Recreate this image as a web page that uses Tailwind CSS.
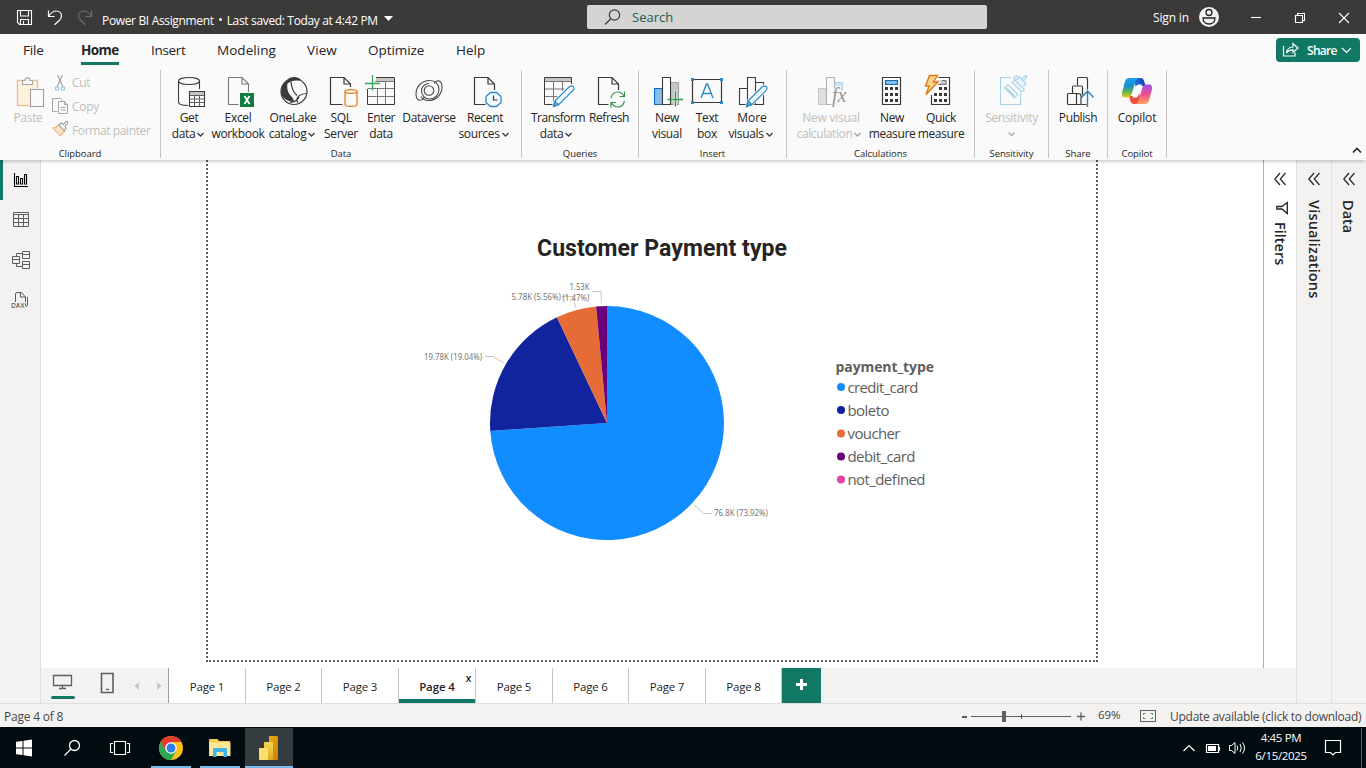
<!DOCTYPE html>
<html lang="en">
<head>
<meta charset="utf-8">
<title>Power BI Assignment</title>
<script src="https://cdn.jsdelivr.net/npm/@tailwindcss/browser@4"></script>
</head>
<body class="w-[1366px] h-[768px] overflow-hidden flex flex-col bg-white font-['Open_Sans','Noto_Sans',sans-serif] text-[12px] leading-4 text-[#252423] whitespace-nowrap">

<!-- Title bar -->
<header class="h-[34px] shrink-0 bg-[#3b3a39] text-white flex items-center">
  <svg class="w-[100px] h-[34px] shrink-0" viewBox="0 0 100 34" fill="none" stroke="#fff" stroke-width="1.1">
    <path d="M17.5 10.5h14v14h-12l-2-2zM20.500 10.500v5.500h8v-5.500M20.500 24.500v-5h8v5M23.500 24v-3"/>
    <path d="M48.500 10.500v6h6M48.700 16.300C51 12.500 53 11 56 11c3.500 0 5.500 2.300 5.500 5 0 1.800-.8 3-2 4.200L54.500 24.800" stroke-width="1.200"/>
    <path d="M91.500 10.500v6h-6M91.300 16.300C89 12.500 87 11 84 11c-3.500 0-5.500 2.300-5.500 5 0 1.800.8 3 2 4.200L85.500 24.800" stroke="#6e6d6c" stroke-width="1.200"/>
  </svg>
  <div class="w-[487px] flex items-center pl-[2px] pt-[7px]">
    <span class="tracking-[-0.34px]">Power BI Assignment</span>
    <span class="w-[3px] h-[3px] rounded-full bg-white mx-[5px] mb-[2px]"></span>
    <span class="tracking-[-0.34px]">Last saved: Today at 4:42 PM</span>
    <svg class="w-[9px] h-[5px] ml-[6px] mb-[5px]" viewBox="0 0 9 5"><path d="M0 0h9L4.500 5z" fill="#fff"/></svg>
  </div>
  <div class="w-[400px] h-[24px] rounded-[2px] bg-[#d4d4d2] flex items-center">
    <svg class="w-[18px] h-[18px] ml-[17px]" viewBox="0 0 18 18" fill="none" stroke="#3b3a39" stroke-width="1.200"><circle cx="10.500" cy="7" r="5.200"/><path d="M6.800 10.800L1 16.500"/></svg>
    <span class="ml-[10px] text-[13px] text-[#215f50]">Search</span>
  </div>
  <div class="flex-1 flex items-center pl-[166px]">
    <span class="w-[46px] pt-[2px] tracking-[-0.15px]">Sign in</span>
    <svg class="w-[167px] h-[34px]" viewBox="1199 0 167 34" fill="none" stroke="#fff" stroke-width="1.100">
      <circle cx="1209" cy="17" r="10" fill="#f3f2f1" stroke="none"/>
      <circle cx="1209" cy="12.500" r="3" stroke="#252423" stroke-width="1.300"/>
      <path d="M1203 18h12c0 3.500-2.300 6-6 6s-6-2.500-6-6z" stroke="#252423" stroke-width="1.300"/>
      <path d="M1251 17.500h10"/>
      <path d="M1295.500 15.500h7v7h-7zM1297.500 15.500v-2h7v7h-2"/>
      <path d="M1339 13l10 10M1349 13l-10 10"/>
    </svg>
  </div>
</header>

<!-- Ribbon tabs -->
<nav class="h-[34px] shrink-0 bg-[#fafafa] flex items-start pl-[23px] pt-[6px] text-[13.500px] leading-[20px] text-[#252423]">
  <span class="w-[58px] tracking-[-0.2px]">File</span>
  <span class="w-[70px]"><span class="inline-block w-[38px] h-[25px] border-b-[3px] border-[#117865] font-bold text-[13.500px] tracking-[-0.55px]">Home</span></span>
  <span class="w-[66px] tracking-[-0.3px]">Insert</span>
  <span class="w-[90px] tracking-[0.05px]">Modeling</span>
  <span class="w-[61px] tracking-[0.1px]">View</span>
  <span class="w-[88px] tracking-[-0.05px]">Optimize</span>
  <span class="flex-1">Help</span>
  <div class="w-[84px] h-[24px] mt-[-2px] mr-[6px] rounded-[4px] bg-[#117865] text-white flex items-center text-[12px] font-semibold">
    <svg class="w-[18px] h-[16px] ml-[6px]" viewBox="0 0 18 16" fill="none" stroke="#fff" stroke-width="1.200"><path d="M1.500 4v10h11.500v-3.500"/><path d="M4.500 11C5 7 7.500 5 11 5V1.500L16 6l-5 4.500V7.800C8 7.800 6 8.800 4.500 11z"/></svg>
    <span class="ml-[7px] pt-[2px] tracking-[-0.7px]">Share</span>
    <svg class="w-[11px] h-[7px] ml-[4px]" viewBox="0 0 11 7" fill="none" stroke="#fff" stroke-width="1.200"><path d="M1 1l4.500 4.500L10 1"/></svg>
  </div>
</nav>

<!-- Ribbon -->
<section class="relative z-10 h-[92px] shrink-0 bg-[#fafafa] flex items-start pt-[2px] shadow-[0_3px_3px_-1px_rgba(0,0,0,0.18)]">
  <!-- Clipboard -->
  <div class="w-[161px] h-[88px] border-r border-[#c8c6c4] flex flex-col">
    <div class="h-[78px] shrink-0 flex text-[#c0bebc]">
      <div class="w-[52px] flex flex-col items-center pl-[4px] pt-[4px]">
        <svg class="w-[36px] h-[34px]" viewBox="10 74 36 34" fill="none" stroke-width="1.100"><path d="M18.500 82.500v21h11v-14h7v-7z" fill="#fdf1dc"/><path d="M23 80.500h-5.500v25h12M32 80.500h5.500v8" stroke="#efc08c" stroke-width="1.400"/><path d="M22.500 84.500v-4h2.500c0-3.500 5-3.500 5 0h2.500v4z" fill="#fafafa" stroke="#a8a6a4"/><path d="M30.500 89.500h13v17h-13z" fill="#fafafa" stroke="#a09e9c"/></svg>
        <span class="mt-[2px] tracking-[-0.3px]">Paste</span>
      </div>
      <div class="flex flex-col pt-[1px]">
        <div class="h-[24px] flex items-center"><svg class="w-[20px] h-[24px]" viewBox="52 71 20 24" fill="none" stroke="#a8a6a4" stroke-width="1.200"><path d="M57.500 75l5.500 12M62.500 75l-5.500 12"/><path d="M55.500 87h3v3h-3zM61.500 87h3v3h-3z" stroke="#9cc8e6"/></svg><span class="tracking-[-0.3px]">Cut</span></div>
        <div class="h-[24px] flex items-center"><svg class="w-[20px] h-[24px]" viewBox="52 95 20 24" fill="none" stroke="#a8a6a4"><path d="M57.500 111.500h-5v-13h8l2 2"/><path d="M58.500 101.500h6l3 3v9h-9zM64.500 101.500v3h3M60.500 107.500h5M60.500 110h5"/></svg><span class="tracking-[-0.3px]">Copy</span></div>
        <div class="h-[24px] flex items-center"><svg class="w-[20px] h-[24px]" viewBox="52 119 20 24" fill="none" stroke-width="1.100"><path d="M53 128c3 0 4-1 6-3l6 6c-2 2-3 3-5 5z" fill="#fbe3c6" stroke="#edb880"/><path d="M59 125l2-2 2.500 1.500 2.500-3c1.500-.8 2.200.5 1.500 1.800L65 126l1 2.500-2 2z" fill="#fafafa" stroke="#a09e9c"/></svg><span class="tracking-[-0.38px]">Format painter</span></div>
      </div>
    </div>
    <span class="h-3 shrink-0 leading-3 text-center text-[9.500px] tracking-[-0.05px]">Clipboard</span>
  </div>
  <!-- Data -->
  <div class="w-[361px] h-[88px] border-r border-[#c8c6c4] flex flex-col">
    <div class="h-[78px] shrink-0 flex pl-[4px] pt-[4px] tracking-[-0.34px]">
      <div class="w-[48px] flex flex-col items-center">
        <svg class="w-[36px] h-[34px] mb-[2px] shrink-0" viewBox="171 74 36 34" fill="none" stroke="#3b3a39" stroke-width="1.100"><path d="M188 105.500c-5.500 0-9.500-1.500-9.500-3.500V81c0-2 4.500-3.500 10.500-3.500s10.500 1.500 10.500 3.500v8"/><path d="M178.500 81c0 2 4.500 3.500 10.500 3.500s10.500-1.500 10.500-3.500"/><path d="M189.500 91.500h15v15h-15z" fill="#fff"/><path d="M190 92h14v3h-14z" fill="#c8c6c4" stroke="none"/><path d="M189.500 95.500h15M189.500 99h15M189.500 102.500h15M194.500 95v11M199.500 95v11" stroke="#605e5c" stroke-width="1"/></svg>
        <span>Get</span><span class="flex items-center gap-[2px] -ml-[2px]">data<svg class="w-[7px] h-[5px]" viewBox="0 0 7 5" fill="none" stroke="#3b3a39" stroke-width="1.300"><path d="M.5 1l3 3 3-3"/></svg></span>
      </div>
      <div class="w-[50px] flex flex-col items-center">
        <svg class="w-[36px] h-[34px] mb-[2px] shrink-0" viewBox="220 74 36 34" fill="none" stroke="#797775" stroke-width="1.100"><path d="M238.500 104.500h-10v-27h13.500l6.500 6.500V92M242 77.500v6.500h6.500"/><path d="M240 93h14v14h-14z" fill="#107c41" stroke="none"/><path d="M244.500 96l5 8M249.500 96l-5 8" stroke="#fff" stroke-width="1.800"/></svg>
        <span>Excel</span><span>workbook</span>
      </div>
      <div class="w-[60px] flex flex-col items-center">
        <svg class="w-[36px] h-[34px] mb-[2px] shrink-0" viewBox="275 74 36 34" fill="none" stroke="#3b3a39" stroke-width="1.200"><circle cx="294" cy="91.500" r="13" fill="#fafafa"/><path d="M286.500 80.800C289 76.500 297 75.500 301 79.800l-2.500 1c-4-.8-8 .5-11 2.700-1 5 .5 9.500 4 13 2 2.500 3 4 1.500 5.500-4.500-.5-8.500-3-11-6-2-5.500-.5-11.500 4.500-15.200z" fill="#3b3a39" stroke="none"/><path d="M291 81.500c.5 6 2.500 11 6 14M298 102.500c-3-3 0-8.500 8.500-9M290 102.500c8-1 9-5 9-7"/></svg>
        <span>OneLake</span><span class="flex items-center gap-[2px] -ml-[2px]">catalog<svg class="w-[7px] h-[5px]" viewBox="0 0 7 5" fill="none" stroke="#3b3a39" stroke-width="1.300"><path d="M.5 1l3 3 3-3"/></svg></span>
      </div>
      <div class="w-[36px] flex flex-col items-center">
        <svg class="w-[36px] h-[34px] mb-[2px] shrink-0" viewBox="323 74 36 34" fill="none" stroke="#3b3a39" stroke-width="1.200"><path d="M342.500 104.500h-12v-27h13.500l6.500 6.500V87M344 77.500v6.500h6.500"/><path d="M345 91.500v13c0 2.500 12 2.500 12 0v-13" stroke="#e07714" fill="#fafafa"/><ellipse cx="351" cy="91.500" rx="6" ry="1.900" stroke="#e07714" fill="#fafafa"/></svg>
        <span>SQL</span><span>Server</span>
      </div>
      <div class="w-[44px] flex flex-col items-center">
        <svg class="w-[36px] h-[34px] mb-[2px] shrink-0" viewBox="363 74 36 34" fill="none" stroke="#797775" stroke-width="1"><path d="M376 78h18v3.500h-18z" fill="#c8c6c4" stroke="none"/><path d="M375 81.500h19.500M368 88.500h26.500M368 96.500h26.500M377.500 88v16.500M385.500 82v22.500"/><path d="M376 77.500h18.500v27h-27V89" stroke="#3b3a39"/><path d="M365 83.500h15M372.500 75v15.500" stroke="#3aa655" stroke-width="1.300"/></svg>
        <span>Enter</span><span>data</span>
      </div>
      <div class="w-[52px] flex flex-col items-center">
        <svg class="w-[36px] h-[34px] mb-[2px] shrink-0" viewBox="411 74 36 34" fill="none" stroke="#4b4947" stroke-width="1.100"><circle cx="429" cy="90.500" r="4.800"/><path d="M424 97.500c-3 4.500-8 3.500-8-3.500 0-8 6.500-13.500 13.500-13.500 6 0 9.500 4 9.500 9s-4 9.500-9.500 9.500c-4.500 0-8-3.500-8-8.500 0-3.500 3.500-7 7.500-7"/><path d="M434 83.500c3-4.500 8-3.500 8 3.500 0 8-6.500 13.500-13.500 13.500-3 0-6-1.500-7.500-4"/></svg>
        <span>Dataverse</span>
      </div>
      <div class="w-[60px] flex flex-col items-center">
        <svg class="w-[36px] h-[34px] mb-[2px] shrink-0" viewBox="467 74 36 34" fill="none" stroke="#3b3a39" stroke-width="1.200"><path d="M485.500 104.500h-11v-27h13.500l6.500 6.500V90M488 77.500v6.500h6.500"/><path d="M490.500 92.500h6l4.500 4v6l-4.500 4h-6l-4.500-4v-6z" fill="#f3faff" stroke="#2b88c8" stroke-width="1.300"/><path d="M493.500 95.500v4.500h4"/></svg>
        <span>Recent</span><span class="flex items-center gap-[2px] -ml-[3px]">sources<svg class="w-[7px] h-[5px]" viewBox="0 0 7 5" fill="none" stroke="#3b3a39" stroke-width="1.300"><path d="M.5 1l3 3 3-3"/></svg></span>
      </div>
    </div>
    <span class="h-3 shrink-0 leading-3 text-center text-[9.500px] tracking-[-0.05px]">Data</span>
  </div>
  <!-- Queries -->
  <div class="w-[117px] h-[88px] border-r border-[#c8c6c4] flex flex-col">
    <div class="h-[78px] shrink-0 flex pl-[8px] pt-[4px] tracking-[-0.34px]">
      <div class="w-[56px] flex flex-col items-center">
        <svg class="w-[36px] h-[34px] mb-[2px] shrink-0" viewBox="541 74 36 34" fill="none" stroke="#797775" stroke-width="1"><path d="M546 78h26v3.500h-26z" fill="#c8c6c4" stroke="none"/><path d="M545.500 81.500h27M545.500 89h20M545.500 96.500h15M554.500 82v22M563.500 82v9"/><path d="M554 104.500h-8.500v-27h27V84" stroke="#3b3a39"/><path d="M556 101l14.500-14.500c3-2 5.500 1 4 3.500L560 104.500l-5.500 2z" fill="#f3faff" stroke="#fafafa" stroke-width="3"/><path d="M556 101l14.500-14.500c3-2 5.500 1 4 3.500L560 104.500l-5.500 2z" fill="#f3faff" stroke="#2b88c8" stroke-width="1.200"/><path d="M556 101l4 3.500-5.500 2z" fill="#5ba7dd" stroke="#2b88c8"/></svg>
        <span class="tracking-[-0.5px]">Transform</span><span class="flex items-center gap-[2px] -ml-[4px]">data<svg class="w-[7px] h-[5px]" viewBox="0 0 7 5" fill="none" stroke="#3b3a39" stroke-width="1.300"><path d="M.5 1l3 3 3-3"/></svg></span>
      </div>
      <div class="w-[46px] flex flex-col items-center">
        <svg class="w-[36px] h-[34px] mb-[2px] shrink-0" viewBox="591 74 36 34" fill="none" stroke="#3b3a39" stroke-width="1.200"><path d="M608.500 104.500h-10v-27h13.500l6.500 6.500v6M612 77.500v6.500h6.500"/><path d="M611 98c1-4 3.500-6 6.500-6 3 0 5 1.500 6.500 4M624.500 91.500v5h-5M624.500 101c-1 4-3.500 6-6.500 6-3 0-5-1.500-6.500-4M611 107.500v-5h5" stroke="#2f9a4c" stroke-width="1.200"/></svg>
        <span class="tracking-[-0.45px]">Refresh</span>
      </div>
    </div>
    <span class="h-3 shrink-0 leading-3 text-center text-[9.500px] tracking-[-0.05px]">Queries</span>
  </div>
  <!-- Insert -->
  <div class="w-[148px] h-[88px] border-r border-[#c8c6c4] flex flex-col">
    <div class="h-[78px] shrink-0 flex pl-[8px] pt-[4px] tracking-[-0.34px]">
      <div class="w-[40px] flex flex-col items-center">
        <svg class="w-[36px] h-[34px] mb-[2px] shrink-0" viewBox="649 74 36 34" fill="none" stroke-width="1.100"><path d="M670.500 82.500h8v22h-8z" fill="#c8c6c4" stroke="#a19f9d"/><path d="M654.500 88.500h8v16h-8z" fill="#83beec" stroke="#0f6cbd"/><path d="M662.500 77.500h8v27h-8z" fill="#fff" stroke="#3b3a39"/><path d="M675.500 90.500v15M672 99.500h6" stroke="#fafafa" stroke-width="3"/><path d="M675.500 91v15.500M667.500 99.500h15.500" stroke="#2f9a4c" stroke-width="1.500"/></svg>
        <span>New</span><span>visual</span>
      </div>
      <div class="w-[40px] flex flex-col items-center">
        <svg class="w-[36px] h-[34px] mb-[2px] shrink-0" viewBox="689 74 36 34" fill="none" stroke="#3b3a39" stroke-width="1.200"><path d="M692.500 79.500h29v23h-29z"/><path d="M701 98l5.500-14h1l5.500 14M703 93.500h8" stroke="#2b88c8" stroke-width="1.400"/><path d="M691 78h3v3h-3zM720 78h3v3h-3zM691 101h3v3h-3zM720 101h3v3h-3z" fill="#2b88c8" stroke="none"/></svg>
        <span>Text</span><span>box</span>
      </div>
      <div class="w-[50px] flex flex-col items-center">
        <svg class="w-[36px] h-[34px] mb-[2px] shrink-0" viewBox="734 74 36 34" fill="none" stroke="#3b3a39" stroke-width="1.100"><path d="M739.500 88.500h8v16h-8zM747.500 77.500h8v27h-8zM755.500 82.500h8v22h-8z"/><path d="M748 101l14.500-14.500c3-2 5.500 1 4 3.500L752 104.500l-5.500 2z" fill="#f3faff" stroke="#fafafa" stroke-width="3"/><path d="M748 101l14.500-14.500c3-2 5.500 1 4 3.500L752 104.500l-5.500 2z" fill="#f3faff" stroke="#2b88c8" stroke-width="1.200"/><path d="M748 101l4 3.500-5.500 2z" fill="#5ba7dd" stroke="#2b88c8"/></svg>
        <span class="tracking-[0]">More</span><span class="flex items-center gap-[2px] -ml-[3px]">visuals<svg class="w-[7px] h-[5px]" viewBox="0 0 7 5" fill="none" stroke="#3b3a39" stroke-width="1.300"><path d="M.5 1l3 3 3-3"/></svg></span>
      </div>
    </div>
    <span class="h-3 shrink-0 leading-3 text-center text-[9.500px] tracking-[-0.05px]">Insert</span>
  </div>
  <!-- Calculations -->
  <div class="w-[188px] h-[88px] border-r border-[#c8c6c4] flex flex-col">
    <div class="h-[78px] shrink-0 flex pl-[8px] pt-[4px] tracking-[-0.4px]">
      <div class="w-[72px] flex flex-col items-center text-[#c0bebc]">
        <svg class="w-[36px] h-[34px] mb-[2px] shrink-0" viewBox="813 74 36 34" fill="none" stroke-width="1.100"><path d="M834.500 82.500h8v7h-8z" fill="#cfe4f5" stroke="#b5d5ee"/><path d="M818.500 88.500h8v16h-8z" fill="#e1dfdd" stroke="#c8c6c4"/><path d="M826.500 77.500h8v27h-8z" fill="#fafafa" stroke="#b3b0ad"/><text x="832" y="102" class="font-['Liberation_Serif',serif] italic text-[20px]" fill="#979593" stroke="#fafafa" stroke-width="2" paint-order="stroke" letter-spacing="0">fx</text></svg>
        <span class="tracking-[-0.25px]">New visual</span><span class="flex items-center gap-[2px] -ml-[4px]">calculation<svg class="w-[7px] h-[5px]" viewBox="0 0 7 5" fill="none" stroke="#a19f9d" stroke-width="1.300"><path d="M.5 1l3 3 3-3"/></svg></span>
      </div>
      <div class="w-[50px] flex flex-col items-center">
        <svg class="w-[36px] h-[34px] mb-[2px] shrink-0" viewBox="874 74 36 34" fill="none" stroke="#3b3a39" stroke-width="1.200"><path d="M882.500 77.500h18v27h-18z" fill="#fff"/><path d="M885.500 80.500h12v4h-12z" fill="#83beec" stroke="#0f6cbd"/><path d="M885 88.500h3m2 0h3m2 0h3M885 94.500h3m2 0h3m2 0h3M885 100.500h3m2 0h3m2 0h3" stroke-width="3"/></svg>
        <span>New</span><span>measure</span>
      </div>
      <div class="w-[48px] flex flex-col items-center">
        <svg class="w-[36px] h-[34px] mb-[2px] shrink-0" viewBox="923 74 36 34" fill="none" stroke="#3b3a39" stroke-width="1.200"><path d="M937 77.500h12.500v27h-18V95" fill="#fff"/><path d="M936 80.500h10v4h-10z" fill="#c8c6c4" stroke="#797775"/><path d="M939 88.500h3m2 0h3M934 94.500h3m2 0h3m2 0h3M934 100.500h3m2 0h3m2 0h3" stroke-width="3"/><path d="M929.500 75.500h8l-4 6.500h4.500l-12 12.500 3-8.500h-3.500z" fill="#fbd38b" stroke="#fafafa" stroke-width="3.500"/><path d="M929.500 75.500h8l-4 6.500h4.500l-12 12.500 3-8.500h-3.500z" fill="#fbd38b" stroke="#e07714" stroke-width="1.400"/></svg>
        <span>Quick</span><span>measure</span>
      </div>
    </div>
    <span class="h-3 shrink-0 leading-3 text-center text-[9.500px] tracking-[-0.05px]">Calculations</span>
  </div>
  <!-- Sensitivity -->
  <div class="w-[74px] h-[88px] border-r border-[#c8c6c4] flex flex-col">
    <div class="h-[78px] shrink-0 flex flex-col items-center pt-[4px] text-[#c0bebc]">
      <svg class="w-[36px] h-[34px] mb-[2px] shrink-0" viewBox="994 74 36 34" fill="none" stroke="#a9d2ea" stroke-width="1.100"><path d="M1011 77.500h-10.500v27h20V93"/><path d="M1004.500 88l3.500-3.500 10 10-3.500 3.500zM1006.500 88l8 8"/><path d="M1012 82.500l2.500-2.500 10 9.500-3 2.500zM1016.500 80l3-3 6.500 6.500-2.500 3M1019 77.500l-2.500-2-3 2.500 2.500 2.500M1022 79l3.500-3.500 1.500 1.500-3 3.500" fill="#eaf5fb"/></svg>
      <span class="tracking-[-0.3px]">Sensitivity</span>
      <svg class="w-[7px] h-[16px]" viewBox="0 0 7 16" fill="none" stroke="#b3b0ad" stroke-width="1.500"><path d="M.5 6.500l3 3 3-3"/></svg>
    </div>
    <span class="h-3 shrink-0 leading-3 text-center text-[9.500px] tracking-[-0.05px]">Sensitivity</span>
  </div>
  <!-- Share -->
  <div class="w-[59px] h-[88px] border-r border-[#c8c6c4] flex flex-col">
    <div class="h-[78px] shrink-0 flex flex-col items-center pt-[4px]">
      <svg class="w-[36px] h-[34px] mb-[2px] shrink-0" viewBox="1060 74 36 34" fill="none" stroke="#3b3a39" stroke-width="1.200"><path d="M1067.500 94.500q0-1 1-1h8v11h-8q-1 0-1-1z"/><path d="M1072.500 93v-6q0-1 1-1h8q1 0 1 1v8M1076.500 94l1.500-.5q3 0 3 2.500v8.500h-5"/><path d="M1077.500 85.500v-7q0-1 1-1h8q1 0 1 1v11M1086.500 104.500h-5"/><path d="M1087.500 107V91M1081.500 97.500l6-6.500 6 6.500" stroke="#2b7fb8" stroke-width="1.400"/></svg>
      <span class="tracking-[-0.4px]">Publish</span>
    </div>
    <span class="h-3 shrink-0 leading-3 text-center text-[9.500px] tracking-[-0.05px]">Share</span>
  </div>
  <!-- Copilot -->
  <div class="w-[59px] h-[88px] border-r border-[#c8c6c4] flex flex-col">
    <div class="h-[78px] shrink-0 flex flex-col items-center pt-[4px]">
      <svg class="w-[36px] h-[34px] mb-[2px] shrink-0" viewBox="1119 74 36 34">
        <defs>
          <linearGradient id="cpA" x1="0" y1="0" x2="0" y2="1"><stop offset="0" stop-color="#1ba1f0"/><stop offset=".4" stop-color="#158ed0"/><stop offset=".7" stop-color="#5fb352"/><stop offset="1" stop-color="#f5cb12"/></linearGradient>
          <linearGradient id="cpB" x1="0" y1="0" x2="0" y2="1"><stop offset="0" stop-color="#9a4fe8"/><stop offset=".5" stop-color="#ee5090"/><stop offset="1" stop-color="#ffa35c"/></linearGradient>
          <linearGradient id="cpC" x1="0" y1="0" x2="1" y2="0"><stop offset="0" stop-color="#1d7be0"/><stop offset="1" stop-color="#1840b8"/></linearGradient>
        </defs>
        <path d="M1133 78h7.500c2 0 2.800.8 3.500 2.500l1.500 5.500h-5l-4 3z" fill="url(#cpC)"/>
        <path d="M1141 104h-7c-2 0-2.800-1-3.500-2.500L1129 96h6l4-4z" fill="#e95040"/>
        <path d="M1129 78h9.500c-3 1-3.500 5-5 10l-2 6.500c-.8 2-1.500 3-3.500 3h-3c-3 0-3.500-2.500-2.700-6l2.700-10c.8-2.300 2-3.500 4-3.500z" fill="url(#cpA)"/>
        <path d="M1145 104h-9.500c3-1 3.500-5 5-10l2-6.500c.8-2 1.500-3 3.500-3h3c3 0 3.500 2.500 2.700 6l-2.700 10c-.8 2.300-2 3.500-4 3.500z" fill="url(#cpB)"/>
        <path d="M1138.500 84.500h3.500l-1 2.500-2.500 8c-.5 1.500-1 2.500-2 2.500h-4l.8-2.500 2.500-8c.6-1.500 1.200-2.500 2.700-2.500z" fill="#fff"/>
      </svg>
      <span class="tracking-[-0.15px]">Copilot</span>
    </div>
    <span class="h-3 shrink-0 leading-3 text-center text-[9.500px] tracking-[-0.05px]">Copilot</span>
  </div>
  <svg class="w-[10px] h-[7px] ml-auto mr-[4px] mt-[77px]" viewBox="0 0 10 7" fill="none" stroke="#252423" stroke-width="1.600"><path d="M1 5.500l4-4 4 4"/></svg>
</section>

<!-- Workspace -->
<main class="h-[543px] shrink-0 flex">
  <!-- View switcher -->
  <aside class="w-[41px] bg-[#f3f2f1] border-r border-[#e1dfdd] flex flex-col">
    <div class="h-[40px] border-l-[3px] border-[#117865]">
      <svg class="w-[36px] h-[40px]" viewBox="3 160 36 40" fill="none" stroke="#000" stroke-width="1.100"><path d="M14.500 173v13.500h13.500"/><path d="M16.500 176.500h2v7.500h-2zM20.500 178.500h2v5.500h-2zM24.500 174.500h2v9.500h-2z"/></svg>
    </div>
    <svg class="w-[40px] h-[120px]" viewBox="0 200 40 120" fill="none" stroke="#605e5c" stroke-width="1">
      <path d="M13.500 212.500h15v14h-15zM13.500 214.500h15M13.500 218.500h15M13.500 222.500h15M18.500 214v12M23.500 214v12"/>
      <path d="M12.500 256.500h7v7h-7zM12.500 259.500h7M22.500 251.500h7v7h-7zM22.500 254.500h7M22.500 261.500h7v7h-7zM22.500 264.500h7M16.500 256v-2.500h6M16.500 264v2.500h6"/>
      <path d="M15.500 302v-8q0-1.500 1.500-1.500h4.500l4 4.500v9M20.500 292.500v4.500h5M27.500 297v8l-1.500 2"/>
      <text x="11" y="308" class="font-['Open_Sans',sans-serif] text-[7px] font-semibold" fill="#605e5c" stroke="#f3f2f1" stroke-width="2" paint-order="stroke" textLength="13.500">DAX</text>
    </svg>
  </aside>

  <div class="w-[1255px] flex flex-col">
    <div class="h-[508px] flex">
      <!-- Report canvas -->
      <div class="w-[1222px] pl-[165px]">
        <div class="w-[892px] h-[502px] border-2 border-t-0 border-dotted border-[#605e5c]">
          <svg class="block w-[888px] h-[500px]" viewBox="208 160 888 500">
            <text x="537" y="256" textLength="250" class="font-['Roboto',sans-serif] text-[23px] font-bold" fill="#252423">Customer Payment type</text>
            <path d="M607 423V306A117 117 0 1 1 490.270 430.960z" fill="#118dff"/>
            <path d="M607 423L490.270 430.960A117 117 0 0 1 556.930 317.260z" fill="#12239e"/>
            <path d="M607 423L556.930 317.260A117 117 0 0 1 596.130 306.500z" fill="#e66c37"/>
            <path d="M607 423L596.130 306.500A117 117 0 0 1 607 306z" fill="#6b007b"/>
            <g fill="none" stroke="#c8c6c4"><path d="M485 356.500h8l11 6.500M562 296.500h11l2.500 11M592 291.500h9l.5 12M694 505l9.500 8.500h8"/></g>
            <g class="font-['Noto_Sans',sans-serif] text-[8px]" fill="#777573">
              <text x="424" y="360" textLength="58" lengthAdjust="spacingAndGlyphs">19.78K (19.04%)</text>
              <text x="511.500" y="300" textLength="49.500" lengthAdjust="spacingAndGlyphs">5.78K (5.56%)</text>
              <text x="569.500" y="290" textLength="20" lengthAdjust="spacingAndGlyphs">1.53K</text>
              <text x="562.500" y="301" textLength="27" lengthAdjust="spacingAndGlyphs">(1.47%)</text>
              <text x="714" y="516" textLength="54" lengthAdjust="spacingAndGlyphs">76.8K (73.92%)</text>
            </g>
            <g class="font-['Open_Sans',sans-serif] text-[15px]" fill="#605e5c">
              <text x="835.500" y="372" textLength="98.500" class="text-[14px] font-bold">payment_type</text>
              <text x="847.500" y="393" textLength="71">credit_card</text>
              <text x="847.500" y="416" textLength="42">boleto</text>
              <text x="847.500" y="439" textLength="53">voucher</text>
              <text x="847.500" y="462" textLength="68">debit_card</text>
              <text x="847.500" y="485" textLength="78">not_defined</text>
            </g>
            <circle cx="841" cy="387" r="4" fill="#118dff"/><circle cx="841" cy="410" r="4" fill="#12239e"/><circle cx="841" cy="433.500" r="4" fill="#e66c37"/><circle cx="841" cy="456.500" r="4" fill="#6b007b"/><circle cx="841" cy="479.500" r="4" fill="#e044a7"/>
          </svg>
        </div>
      </div>
      <!-- Filters pane -->
      <div class="w-[33px] border-l border-[#b3b0ad] bg-white flex flex-col items-center text-[14.500px] font-semibold">
        <svg class="w-[12px] h-[14px] mt-[12px]" viewBox="0 0 12 14" fill="none" stroke="#252423" stroke-width="1.200"><path d="M6 1L.8 7 6 13M11.500 1L6.300 7l5.200 6"/></svg>
        <svg class="w-[12px] h-[14px] mt-[15px] ml-[3px]" viewBox="0 0 12 14" fill="none" stroke="#252423" stroke-width="1.300"><path d="M11.300 1.500v11L6 8H.8V5.500H6z"/></svg>
        <span class="[writing-mode:vertical-rl] mt-[7px] leading-[20px]">Filters</span>
      </div>
    </div>
    <!-- Page tabs -->
    <div class="h-[35px] bg-[#f3f2f1] flex text-[11.500px] tracking-[-0.2px]">
      <svg class="w-[127px] h-[35px]" viewBox="41 668 127 35" fill="none" stroke="#605e5c" stroke-width="1.300"><path d="M53.500 675.500h18v10h-18zM62.500 686v2M59 688.500h7"/><path d="M101.500 673.500h11.500v19h-11.500z" stroke-width="1.600"/><path d="M106 689.500h3"/><rect x="51" y="696" width="24" height="3" rx="1.500" fill="#117865" stroke="none"/><path d="M139 682v8l-4.500-4zM157 682v8l4.500-4z" fill="#c8c6c4" stroke="none"/></svg>
      <div class="w-[77px] border-l border-[#a19f9d] bg-white flex items-center justify-center pt-[3px]">Page 1</div>
      <div class="w-[76px] border-l border-[#c8c6c4] bg-white flex items-center justify-center pt-[3px]">Page 2</div>
      <div class="w-[77px] border-l border-[#c8c6c4] bg-white flex items-center justify-center pt-[3px]">Page 3</div>
      <div class="relative w-[77px] border-l border-[#c8c6c4] bg-white flex items-center justify-center pt-[3px] font-semibold"><span class="tracking-[-0.1px]">Page 4</span><span class="absolute right-[4px] top-[2px] text-[10px]">x</span><span class="absolute left-0 right-0 bottom-0 h-[4px] bg-[#117865]"></span></div>
      <div class="w-[77px] border-l border-[#c8c6c4] bg-white flex items-center justify-center pt-[3px]">Page 5</div>
      <div class="w-[76px] border-l border-[#c8c6c4] bg-white flex items-center justify-center pt-[3px]">Page 6</div>
      <div class="w-[77px] border-l border-[#c8c6c4] bg-white flex items-center justify-center pt-[3px]">Page 7</div>
      <div class="w-[76px] border-l border-[#c8c6c4] bg-white flex items-center justify-center pt-[3px]">Page 8</div>
      <div class="w-[40px] border-l border-[#c8c6c4] bg-[#117865] flex items-center justify-center"><svg class="w-[11px] h-[11px] mb-[2px]" viewBox="0 0 11 11"><path d="M5.500 0v11M0 5.500h11" stroke="#fff" stroke-width="3"/></svg></div>
    </div>
  </div>

  <!-- Collapsed panes -->
  <div class="w-[35px] bg-[#f3f2f1] border-l border-[#e1dfdd] flex flex-col items-center text-[14.500px] font-semibold">
    <svg class="w-[12px] h-[14px] mt-[12px]" viewBox="0 0 12 14" fill="none" stroke="#252423" stroke-width="1.200"><path d="M6 1L.8 7 6 13M11.500 1L6.300 7l5.200 6"/></svg>
    <span class="[writing-mode:vertical-rl] mt-[14px] leading-[20px] tracking-[0.17px]">Visualizations</span>
  </div>
  <div class="w-[35px] bg-[#f3f2f1] border-l border-[#e1dfdd] flex flex-col items-center text-[14.500px] font-semibold">
    <svg class="w-[12px] h-[14px] mt-[12px]" viewBox="0 0 12 14" fill="none" stroke="#252423" stroke-width="1.200"><path d="M6 1L.8 7 6 13M11.500 1L6.300 7l5.200 6"/></svg>
    <span class="[writing-mode:vertical-rl] mt-[14px] mr-[2px] leading-[20px]">Data</span>
  </div>
</main>

<!-- Status bar -->
<div class="h-[24px] shrink-0 bg-[#f3f2f1] border-t border-[#e1dfdd] flex items-center pt-[2px] text-[#484644]">
  <span class="w-[961px] shrink-0 pl-[4px] tracking-[-0.2px]">Page 4 of 8</span>
  <svg class="w-[137px] h-[22px] shrink-0 -mt-[2px]" viewBox="961 704 137 22" fill="none" stroke="#605e5c"><path d="M962 716h5" stroke-width="2"/><path d="M971 715.500h100M1021.500 713v5"/><path d="M1004 710v11" stroke-width="4"/><path d="M1077 715.500h8M1081 711.500v8" stroke-width="1.300"/></svg>
  <span class="w-[42px] shrink-0 -mt-[3px] text-[11.500px] tracking-[-0.1px]">69%</span>
  <svg class="w-[16px] h-[12px] shrink-0 -mt-[2px]" viewBox="0 0 16 12" fill="none" stroke="#605e5c" stroke-width="1"><path d="M.5.500h15v11H.5z"/><path d="M5.500 3.500h-2V5M5.500 8.500h-2V7M10.500 3.500h2V5M10.500 8.500h2V7" stroke="#4f9a63"/></svg>
  <span class="ml-[14px] tracking-[-0.26px]">Update available (click to download)</span>
</div>

<!-- Taskbar -->
<footer class="h-[41px] shrink-0 bg-[#020c10] text-white flex">
  <svg class="w-[245px] h-[41px]" viewBox="0 727 245 41" fill="none">
    <path d="M16 741.800l6.500-.9v6.600H16zM23.500 740.800l8.500-1.200v7.900h-8.500zM16 748.500h6.500v6.600l-6.500-.9zM23.500 748.500H32v7.900l-8.500-1.200z" fill="#fff"/>
    <g stroke="#fff" stroke-width="1.300"><circle cx="74.500" cy="745.500" r="5"/><path d="M71 749l-6.500 6.500"/><path d="M114.500 741.500h11v13h-11zM113 743.500h-2.500v9h2.500M127 743.500h2.500v9H127" stroke-width="1.100"/></g>
    <circle cx="171" cy="748" r="12" fill="#fbc116"/>
    <path d="M171 748L160.600 742A12 12 0 0 0 171 760L176.200 751z" fill="#2da94f"/>
    <path d="M171 748L165.800 751L160.600 742A12 12 0 0 1 181.400 742H171z" fill="#e33b2e"/>
    <circle cx="171" cy="748" r="5.800" fill="#fff"/><circle cx="171" cy="748" r="4.500" fill="#2f7de9"/>
    <path d="M209 740q0-1 1-1h7.500l1.500 2h11v15h-21z" fill="#f8cf4d"/><path d="M209.500 742.500h21V756h-21z" fill="#ffe69a"/><path d="M213 757v-7.500q0-1.500 1.500-1.500h11q1.500 0 1.500 1.500v7.500h-3.500v-5h-7v5z" fill="#3cb4e8"/>
    <path d="M151 766h40v2h-40zM200 766h40v2h-40z" fill="#76b9ed"/>
  </svg>
  <div class="w-[48px] mt-px bg-[#343c3f] border-b-2 border-[#76b9ed]">
    <svg class="w-[48px] h-[38px]" viewBox="245 728 48 38">
      <defs><linearGradient id="pbA" x1="0" y1="0" x2="1" y2="1"><stop offset="0" stop-color="#e8ad10"/><stop offset="1" stop-color="#c87f0e"/></linearGradient><linearGradient id="pbB" x1="0" y1="0" x2="0" y2="1"><stop offset="0" stop-color="#f5d650"/><stop offset="1" stop-color="#e3a91c"/></linearGradient></defs>
      <rect x="269" y="736" width="9" height="24" rx="1" fill="url(#pbA)"/><rect x="264" y="742" width="9" height="18" rx="1" fill="url(#pbB)"/><rect x="259" y="748" width="9" height="12" rx="1" fill="#f9df70"/>
    </svg>
  </div>
  <svg class="w-[67px] h-[41px] ml-[886px]" viewBox="1179 727 67 41" fill="none" stroke="#fff" stroke-width="1.200"><path d="M1183.500 751l5.500-5.500 5.500 5.500"/><path d="M1206.500 744.500h12v8h-12zM1219.500 747v3.500"/><path d="M1208 746h8v5h-8z" fill="#fff" stroke="none"/><path d="M1229.500 745.500h2l3.500-3v11l-3.500-3h-2zM1237 745.500q1.500 2.500 0 5M1240 744q2.500 4 0 8M1242.500 742.500q4 5.500 0 11" stroke-width="1"/></svg>
  <div class="w-[70px] pt-[2px] flex flex-col items-center text-[11.500px] leading-[18px] tracking-[-0.35px]"><span>4:45 PM</span><span>6/15/2025</span></div>
  <svg class="w-[50px] h-[41px]" viewBox="1316 727 50 41" fill="none" stroke="#fff" stroke-width="1.200"><path d="M1325.500 740.500h15v12h-5l-2.500 2.500-2.500-2.500h-5z"/><path d="M1361.500 728v40" stroke="#5a6164" stroke-width="1"/></svg>
</footer>
</body>
</html>
